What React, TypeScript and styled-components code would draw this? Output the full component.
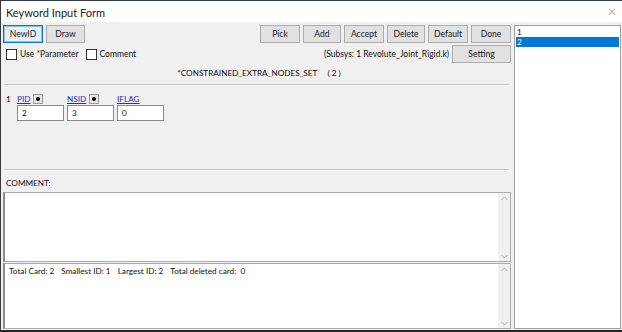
import React from "react";
import styled, { createGlobalStyle } from "styled-components";

const Global = createGlobalStyle`
  html, body { margin: 0; padding: 0; background: #ffffff; }
  * { box-sizing: border-box; }
`;

const FONT = `Lato, "Noto Sans", sans-serif`;

const Window = styled.div`
  width: 622px;
  height: 332px;
  display: flex;
  flex-direction: column;
  background: #f0f0f0;
  border-top: 1px solid #2f3a48;
  border-left: 1px solid #3a3a3a;
  border-bottom: 2px solid #262626;
  font-family: ${FONT};
  font-size: 8.2px;
  color: #111;
  overflow: hidden;
`;

const TitleBar = styled.div`
  height: 21px;
  flex: none;
  background: #ffffff;
  display: flex;
  align-items: center;
  justify-content: space-between;
  padding: 1px 5px 0 5px;
  font-size: 11px;
  color: #1a1a1a;
`;

const Close = styled.span`
  color: #c0c0c0;
  font-size: 12px;
  font-weight: 300;
  line-height: 1;
`;

const Body = styled.div`
  flex: 1;
  display: flex;
  gap: 3px;
  padding: 2px 1px 1px 2px;
  min-height: 0;
`;

const MainCol = styled.div`
  width: 508px;
  display: flex;
  flex-direction: column;
  padding-top: 1px;
`;

const Toolbar = styled.div`
  display: flex;
  gap: 3px;
  height: 18px;
  flex: none;
`;

const Spacer = styled.div`
  flex: 1;
`;

const Gap = styled.div`
  flex: none;
  height: 1px;
`;

const Button = styled.button<{ $w: number; $primary?: boolean }>`
  width: ${(p) => p.$w}px;
  height: 18px;
  padding: 0;
  margin: 0;
  font-family: ${FONT};
  font-size: 8.6px;
  color: #1a1a1a;
  background: ${(p) => (p.$primary ? "#e5f1fb" : "#e1e1e1")};
  border: 1px solid ${(p) => (p.$primary ? "#0078d7" : "#adadad")};
  box-shadow: ${(p) => (p.$primary ? "inset 0 0 0 1px #8cbfea" : "none")};
`;

const OptionRow = styled.div`
  display: flex;
  align-items: center;
  height: 18px;
  margin-top: 2px;
  flex: none;
  padding-left: 3px;
  font-size: 8.5px;
`;

const CheckLabel = styled.label`
  display: flex;
  align-items: center;
  gap: 3px;
  margin-right: 7px;
`;

const CheckBox = styled.span`
  width: 11px;
  height: 11px;
  border: 1px solid #333;
  background: #fff;
  display: inline-block;
`;

const Subsys = styled.span`
  margin-right: 3px;
`;

const KeywordTitle = styled.div`
  height: 20px;
  flex: none;
  display: flex;
  align-items: center;
  justify-content: center;
  padding-left: 4px;
  white-space: pre;
`;

const CardCount = styled.span`
  margin-left: 10px;
`;

const Separator = styled.div`
  height: 2px;
  flex: none;
  margin: 1px 2px 0 1px;
  border-top: 1px solid #c4c4c4;
  border-bottom: 1px solid #ffffff;
`;

const CardArea = styled.div`
  height: 82px;
  flex: none;
  display: flex;
  padding: 7px 0 0 3px;
`;

const CardIndex = styled.div`
  width: 11px;
  line-height: 12px;
`;

const Fields = styled.div`
  display: flex;
  gap: 2px;
`;

const Field = styled.div`
  width: 48px;
  display: flex;
  flex-direction: column;
`;

const FieldHead = styled.div`
  height: 12px;
  display: flex;
  align-items: center;
  gap: 3px;
`;

const FieldLink = styled.a`
  color: #2b2bc4;
  text-decoration: underline;
`;

const DotButton = styled.span`
  width: 10px;
  height: 10px;
  border: 1px solid #9a9a9a;
  background: #e6e6e6;
  display: inline-flex;
  align-items: center;
  justify-content: center;
  &::after {
    content: "";
    width: 4px;
    height: 4px;
    border-radius: 50%;
    background: #000;
  }
`;

const FieldInput = styled.div`
  height: 16px;
  width: 47px;
  background: #fff;
  border: 1px solid #8a8a8a;
  display: flex;
  align-items: center;
  padding-left: 4px;
`;

const CommentLabel = styled.div`
  flex: none;
  height: 21px;
  padding: 6px 0 0 3px;
  line-height: 12px;
`;

const TextBox = styled.div<{ $h?: number }>`
  ${(p) => (p.$h ? `height: ${p.$h}px; flex: none;` : "flex: 1;")}
  background: #fff;
  border: 1px solid #a9a9a9;
  border-left: 2px solid #8c8c8c;
  display: flex;
`;

const TextContent = styled.div`
  flex: 1;
  display: flex;
  align-items: flex-start;
  gap: 7px;
  padding: 1px 0 0 4px;
  line-height: 12px;
  white-space: pre;
`;

const ScrollBar = styled.div`
  width: 12px;
  background: #f0f0f0;
  display: flex;
  flex-direction: column;
  justify-content: space-between;
  align-items: center;
  padding: 3px 0 2px;
`;

const ListBox = styled.div`
  flex: 1;
  background: #fff;
  border: 1px solid #a0a0a0;
  margin-top: 1px;
  padding: 1px;
  display: flex;
  flex-direction: column;
`;

const ListItem = styled.div<{ $selected?: boolean }>`
  height: 10px;
  line-height: 10px;
  padding-left: 1px;
  background: ${(p) => (p.$selected ? "#0078d7" : "transparent")};
  color: ${(p) => (p.$selected ? "#ffffff" : "#111")};
`;

const Chevron = ({ up }: { up?: boolean }) => (
  <svg width="7" height="5" viewBox="0 0 7 5">
    <path
      d={up ? "M0.5 4 L3.5 1 L6.5 4" : "M0.5 1 L3.5 4 L6.5 1"}
      fill="none"
      stroke="#a6a6a6"
      strokeWidth="1"
    />
  </svg>
);

const fields = [
  { name: "PID", value: "2", dot: true },
  { name: "NSID", value: "3", dot: true },
  { name: "IFLAG", value: "0", dot: false },
];

const stats = ["Total Card: 2", "Smallest ID: 1", "Largest ID: 2", "Total deleted card:  0"];

export default function App() {
  return (
    <>
      <Global />
      <Window>
        <TitleBar>
          <span>Keyword Input Form</span>
          <Close>✕</Close>
        </TitleBar>
        <Body>
          <MainCol>
            <Toolbar>
              <Button $w={40} $primary>NewID</Button>
              <Button $w={39}>Draw</Button>
              <Spacer />
              <Button $w={40}>Pick</Button>
              <Button $w={38}>Add</Button>
              <Button $w={40}>Accept</Button>
              <Button $w={38}>Delete</Button>
              <Button $w={40}>Default</Button>
              <Button $w={40}>Done</Button>
            </Toolbar>
            <OptionRow>
              <CheckLabel>
                <CheckBox />
                Use *Parameter
              </CheckLabel>
              <CheckLabel>
                <CheckBox />
                Comment
              </CheckLabel>
              <Spacer />
              <Subsys>(Subsys: 1 Revolute_Joint_Rigid.k)</Subsys>
              <Button $w={59}>Setting</Button>
            </OptionRow>
            <KeywordTitle>
              *CONSTRAINED_EXTRA_NODES_SET
              <CardCount>{"( 2 )"}</CardCount>
            </KeywordTitle>
            <Separator />
            <CardArea>
              <CardIndex>1</CardIndex>
              <Fields>
                {fields.map((f) => (
                  <Field key={f.name}>
                    <FieldHead>
                      <FieldLink>{f.name}</FieldLink>
                      {f.dot && <DotButton />}
                    </FieldHead>
                    <FieldInput>{f.value}</FieldInput>
                  </Field>
                ))}
              </Fields>
            </CardArea>
            <Separator />
            <CommentLabel>COMMENT:</CommentLabel>
            <TextBox $h={70}>
              <TextContent />
              <ScrollBar>
                <Chevron up />
                <Chevron />
              </ScrollBar>
            </TextBox>
            <Gap />
            <TextBox>
              <TextContent>
                {stats.map((s) => (
                  <span key={s}>{s}</span>
                ))}
              </TextContent>
              <ScrollBar>
                <Chevron up />
                <Chevron />
              </ScrollBar>
            </TextBox>
          </MainCol>
          <ListBox>
            <ListItem>1</ListItem>
            <ListItem $selected>2</ListItem>
          </ListBox>
        </Body>
      </Window>
    </>
  );
}
